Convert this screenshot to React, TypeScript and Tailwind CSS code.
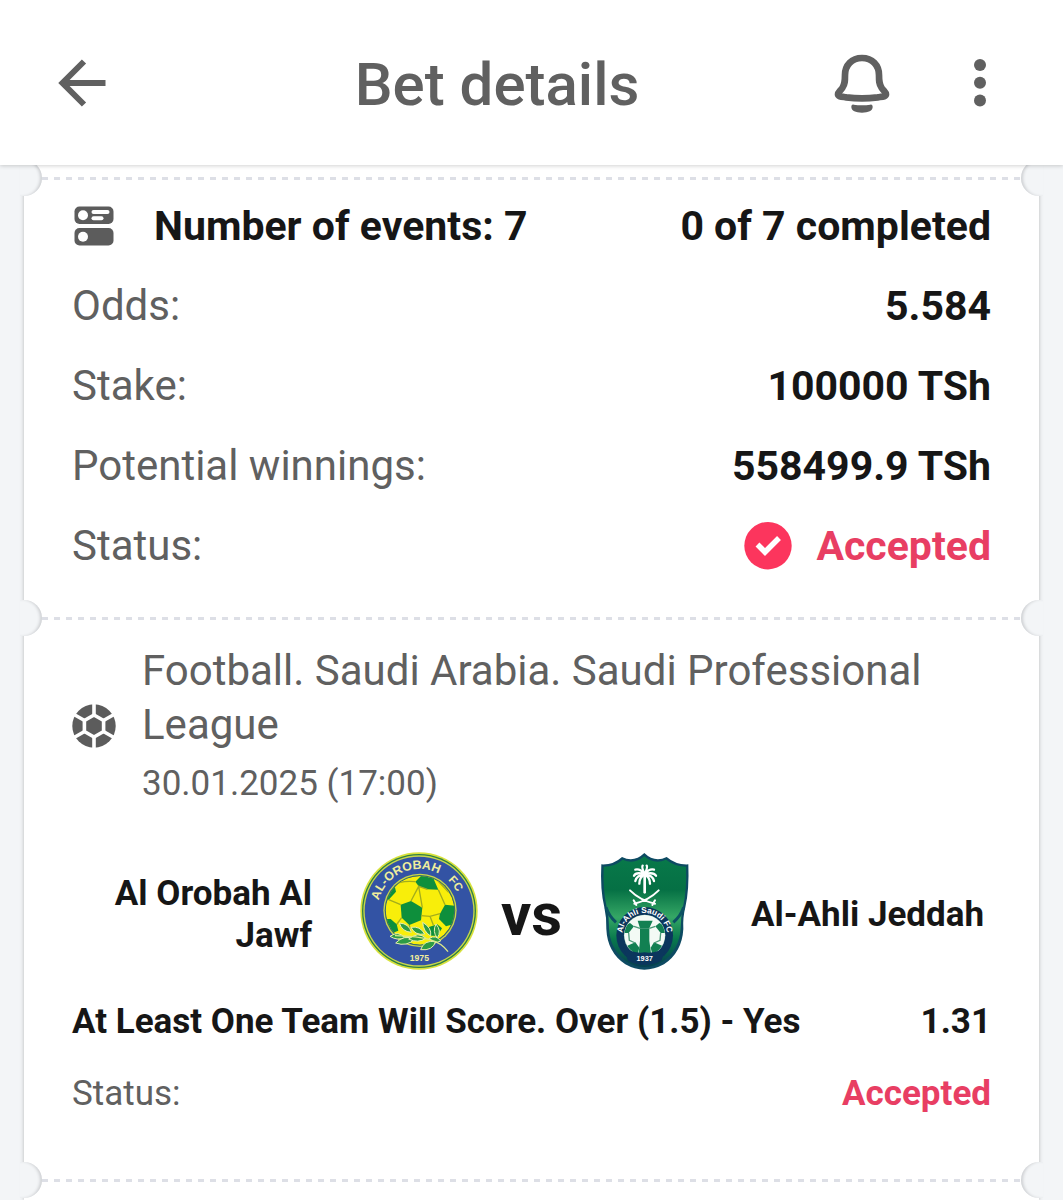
import React from "react";

interface SummaryRow {
  label: string;
  value: string;
}

const summary: SummaryRow[] = [
  { label: "Odds:", value: "5.584" },
  { label: "Stake:", value: "100000 TSh" },
  { label: "Potential winnings:", value: "558499.9 TSh" },
];

const BackIcon: React.FC = () => (
  <svg viewBox="0 0 48 48" className="size-12" fill="none" stroke="#606060" strokeWidth="6" aria-hidden="true">
    <path d="M47.500 24H5.500M26 2.500 4.500 24 26 45.500" />
  </svg>
);

const BellIcon: React.FC = () => (
  <svg viewBox="157 67 180 180" className="size-[60px]" aria-hidden="true">
    <path
      d="M247 82C216 82 196 104 196 133C196 150 196 160 188 172C182 181 175 185 175 191C175 198 187 198 200 200C232 204 262 204 294 200C307 198 319 198 319 191C319 185 312 181 306 172C298 160 298 150 298 133C298 104 278 82 247 82Z"
      fill="none"
      stroke="#606060"
      strokeWidth="20"
      strokeLinejoin="round"
    />
    <path
      d="M222 222Q247 226 272 222C277 221 279 224 279 229C279 240 266 246 247 246C228 246 215 240 215 229C215 224 217 221 222 222Z"
      fill="#606060"
    />
  </svg>
);

const MoreIcon: React.FC = () => (
  <svg viewBox="0 0 12 48" className="h-12 w-3" fill="#606060" aria-hidden="true">
    <circle cx="6" cy="6" r="6" />
    <circle cx="6" cy="23.700" r="6" />
    <circle cx="6" cy="41.400" r="6" />
  </svg>
);

const EventsIcon: React.FC = () => (
  <svg viewBox="-2 -2 44 44" className="size-11" aria-hidden="true">
    <rect x="0.500" y="0.500" width="39" height="17.500" rx="5" fill="#5c5c5c" />
    <rect x="0.500" y="22" width="39" height="17.500" rx="5" fill="#5c5c5c" />
    <g fill="#fff">
      <circle cx="9" cy="9.200" r="5" />
      <circle cx="9" cy="30.800" r="5" />
      <rect x="17.500" y="4" width="18" height="4" rx="2" />
      <rect x="17.500" y="10.200" width="12" height="4" rx="2" />
    </g>
  </svg>
);

const FootballIcon: React.FC = () => (
  <svg viewBox="0 0 44 44" className="size-11 shrink-0" aria-hidden="true">
    <circle cx="22" cy="22" r="21.700" fill="#5c5c5c" />
    <g stroke="#fff" strokeWidth="3.600" fill="none">
      <path d="M22 11 31.600 16.500V27.500L22 33 12.400 27.500V16.500Z" />
      <path d="M22 0V11M22 33V44M31 16.700 42 10.500M31 27.300 42 33.500M13 16.700 2 10.500M13 27.300 2 33.500" />
    </g>
  </svg>
);

const AcceptedIcon: React.FC = () => (
  <svg viewBox="0 0 48 48" className="size-12" aria-hidden="true">
    <circle cx="24" cy="23.700" r="23.700" fill="#fc355d" />
    <path d="M13.500 22.500 21 30 35 16" fill="none" stroke="#fff" strokeWidth="5.500" />
  </svg>
);

const OrobahCrest: React.FC = () => (
  <svg viewBox="30 39 354 354" className="size-[118px] shrink-0" role="img" aria-label="Al Orobah">
    <defs>
      <clipPath id="orobah-ball">
        <circle cx="210" cy="214" r="103" />
      </clipPath>
      <path id="orobah-name" d="M82 216A126 126 0 0 1 334 216" />
    </defs>
    <circle cx="207" cy="216" r="176" fill="#d8e23c" />
    <circle cx="207" cy="216" r="171" fill="#2f7f45" />
    <circle cx="207" cy="216" r="167" fill="#c9d84a" />
    <circle cx="207" cy="216" r="163" fill="#3353a4" />
    <circle cx="210" cy="214" r="110" fill="#c9d84a" />
    <circle cx="210" cy="214" r="106" fill="#3a6a6a" />
    <g clipPath="url(#orobah-ball)">
      <circle cx="210" cy="214" r="103" fill="#f8ee0a" />
      <g fill="#0e8f3c">
        <path d="M152 197 183 186 217 206 213 244 178 258 155 236Z" />
        <path d="M196 128 214 110 250 118 265 152 232 151 206 142Z" />
        <path d="M270 224 285 197 315 200 312 255 288 262 267 240Z" />
        <path d="M100 180 112 148 132 132 138 158 116 182Z" />
        <path d="M100 240 122 240 140 256 145 275 120 285Z" />
        <path d="M237 264 262 256 276 268 262 290 240 290Z" />
      </g>
      <g fill="none" stroke="#a3ad1c" strokeWidth="4">
        <path d="M132 140Q150 124 196 128M206 142 183 186M116 182 152 197M232 151 206 142 217 206M265 152 285 197M213 230 240 232 270 224M240 232 250 258M155 236 140 256M178 258 182 280M262 124 296 160" />
      </g>
    </g>
    <g fill="#2d9b45" stroke="#e9efaf" strokeWidth="3">
      <path d="M120 292Q145 274 164 296Q142 306 120 292Z" />
      <path d="M148 252Q178 254 184 280Q156 278 148 252Z" />
      <path d="M183 265Q210 260 224 285Q195 290 183 265Z" />
      <path d="M218 250Q246 266 242 291Q220 278 218 250Z" />
      <path d="M258 255Q276 276 262 297Q246 278 258 255Z" />
      <path d="M137 312Q162 286 195 300Q170 324 137 312Z" />
      <path d="M176 300Q205 276 228 298Q204 314 176 300Z" />
      <path d="M212 332Q222 302 257 308Q248 336 212 332Z" />
      <path d="M238 298Q258 286 272 306Q254 316 238 298Z" />
    </g>
    <path d="M135 290Q205 292 240 302T294 338" fill="none" stroke="#dbe88a" strokeWidth="4" />
    <g fill="#f0ee9c" fontFamily="Liberation Sans, sans-serif" fontWeight="700">
      <text fontSize="37">
        <textPath href="#orobah-name" startOffset="32">AL-OROBAH</textPath>
      </text>
      <text fontSize="34">
        <textPath href="#orobah-name" startOffset="292">FC</textPath>
      </text>
      <text x="208" y="367" fontSize="26" textAnchor="middle">
        1975
      </text>
    </g>
  </svg>
);

const AhliCrest: React.FC = () => (
  <svg viewBox="-15 39 354 354" className="size-[118px] shrink-0" role="img" aria-label="Al-Ahli">
    <defs>
      <linearGradient id="ahli-shield" x1="0" y1="0" x2="0" y2="1">
        <stop offset="0" stopColor="#08794a" />
        <stop offset="0.300" stopColor="#057044" />
        <stop offset="0.550" stopColor="#35a765" />
        <stop offset="0.750" stopColor="#08784c" />
        <stop offset="1" stopColor="#063f50" />
      </linearGradient>
      <clipPath id="ahli-ball">
        <circle cx="164" cy="289" r="61" />
      </clipPath>
      <path id="ahli-name" d="M97 289A67 67 0 0 1 231 289" />
    </defs>
    <path
      d="M34 76Q70 78 96 54Q132 72 163 42Q194 72 230 54Q258 78 295 76Q298 152 286 205Q278 236 280 270Q276 340 222 376Q192 392 163 392Q134 392 106 376Q52 340 49 270Q50 236 43 205Q30 152 34 76Z"
      fill="#0d4a62"
    />
    <path
      d="M41 83Q74 83 98 62Q133 78 163 52Q193 78 228 62Q256 83 288 83Q291 151 279 204Q272 234 272 268Q268 333 218 368Q191 384 163 384Q136 384 110 368Q60 333 57 268Q58 234 50 204Q38 151 41 83Z"
      fill="url(#ahli-shield)"
    />
    <path d="M48 205Q57 232 78 250M281 205Q272 232 250 250" fill="none" stroke="#0c5263" strokeWidth="9" />
    <g fill="none" stroke="#fff" strokeLinecap="round">
      <path d="M164 108V160" strokeWidth="8" />
      <path
        d="M164 106Q150 88 136 92M164 106Q138 98 132 110M164 106Q140 108 136 126M164 106Q148 114 148 134M164 106Q178 88 192 92M164 106Q190 98 198 110M164 106Q188 108 192 126M164 106Q180 114 180 134M164 106Q154 84 158 80M164 106Q174 84 170 80"
        strokeWidth="7"
      />
      <path d="M120 154Q150 184 195 194M206 154Q176 184 133 194M131 184 139 198M195 184 187 198" strokeWidth="6" />
    </g>
    <circle cx="164" cy="289" r="85" fill="#0b365d" />
    <circle cx="164" cy="289" r="62" fill="#bfe3d0" />
    <g clipPath="url(#ahli-ball)">
      <circle cx="164" cy="289" r="61" fill="#f3faf5" />
      <g fill="#128052">
        <path d="M143 245H188L178 268H150Z" />
        <path d="M150 268H178V305L184 350H145L150 305Z" />
        <path d="M100 262 120 252 132 262 116 282H100Z" />
        <path d="M228 262 208 252 196 262 212 282H228Z" />
        <path d="M112 320 136 310 148 326 142 350H116Z" />
        <path d="M216 320 192 310 182 326 188 350H212Z" />
      </g>
      <path d="M116 282 118 304 136 312M212 282 210 304 192 312M132 262 150 268M196 262 178 268" fill="none" stroke="#4c9a78" strokeWidth="4" />
    </g>
    <path d="M100 325Q132 345 164 340Q196 345 228 325L214 365Q190 378 164 378Q138 378 114 365Z" fill="#0b365d" />
    <g fill="#fff" fontFamily="Liberation Sans, sans-serif" fontWeight="700">
      <text fontSize="25">
        <textPath href="#ahli-name" startOffset="105" textAnchor="middle">
          Al-Ahli Saudi FC
        </textPath>
      </text>
      <text x="164" y="367" fontSize="22" textAnchor="middle">
        1937
      </text>
    </g>
  </svg>
);

// Perforated tear line between two parts of the ticket
const TearLine: React.FC = () => (
  <div className="relative z-[1] -mx-1 flex h-9 items-center">
    <span className="h-9 w-[22px] rounded-r-full bg-[#f3f5f7] shadow-[inset_-3px_0_3px_-1px_#cfd1d4]" />
    <span className="flex h-full flex-1 items-center bg-white">
      <span className="h-[3px] flex-1 bg-[repeating-linear-gradient(90deg,#dddfe6_0_6px,transparent_6px_12px)]" />
    </span>
    <span className="h-9 w-[22px] rounded-l-full bg-[#f3f5f7] shadow-[inset_3px_0_3px_-1px_#cfd1d4]" />
  </div>
);

const App: React.FC = () => {
  return (
    <div className="flex min-h-screen flex-col bg-[#f3f5f7] font-[Roboto,sans-serif] text-[#161616]">
      <header className="relative z-10 flex h-[165px] items-center bg-white pr-[77px] pl-[58px] shadow-[0_1px_4px_rgba(0,0,0,0.18)]">
        <button type="button" aria-label="Back">
          <BackIcon />
        </button>
        <h1 className="ml-14 flex-1 pt-1 text-center text-[60px] leading-[72px] font-medium text-[#606060]">
          Bet details
        </h1>
        <button type="button" aria-label="Notifications">
          <BellIcon />
        </button>
        <button type="button" aria-label="More options" className="ml-[82px]">
          <MoreIcon />
        </button>
      </header>

      <main className="-mt-[5px] flex flex-1 flex-col px-6">
        <div className="flex flex-1 flex-col bg-white shadow-[0_0_4px_rgba(0,0,0,0.25)]">
          <TearLine />

          <section className="flex flex-col gap-8 px-12 pt-1.5 pb-[30px] text-[41px] leading-[48px]">
            <div className="flex items-center font-bold">
              <EventsIcon />
              <h2 className="ml-[38px]">Number of events: 7</h2>
              <span className="ml-auto">0 of 7 completed</span>
            </div>
            {summary.map((row) => (
              <div key={row.label} className="flex justify-between">
                <span className="text-[42px] text-[#606060]">{row.label}</span>
                <span className="font-bold">{row.value}</span>
              </div>
            ))}
            <div className="flex items-center">
              <span className="flex-1 text-[42px] text-[#606060]">Status:</span>
              <AcceptedIcon />
              <span className="ml-6 font-bold text-[#e83e63]">Accepted</span>
            </div>
          </section>

          <TearLine />

          <section className="px-12 pt-2 pb-12 text-[35px] leading-10">
            <div className="flex items-center gap-[26px] text-[#606060]">
              <FootballIcon />
              <div className="flex-1 pb-1">
                <h2 className="text-[42px] leading-[54px]">
                  Football. Saudi Arabia. Saudi Professional League
                </h2>
                <p className="mt-3">30.01.2025 (17:00)</p>
              </div>
            </div>

            <div className="mt-11 flex items-center font-bold">
              <span className="flex-1 pt-2 pr-12 text-right leading-[42px]">Al Orobah Al Jawf</span>
              <OrobahCrest />
              <span className="w-[107px] pt-2 text-center text-[60px]">vs</span>
              <AhliCrest />
              <span className="flex-1 pt-2 pl-12 leading-[42px]">Al-Ahli Jeddah</span>
            </div>

            <div className="mt-8 flex justify-between font-bold">
              <span>At Least One Team Will Score. Over (1.5) - Yes</span>
              <span>1.31</span>
            </div>
            <div className="mt-8 flex justify-between">
              <span className="text-[#606060]">Status:</span>
              <span className="font-bold text-[#e83e63]">Accepted</span>
            </div>
          </section>

          <TearLine />
        </div>
      </main>
    </div>
  );
};

export default App;
